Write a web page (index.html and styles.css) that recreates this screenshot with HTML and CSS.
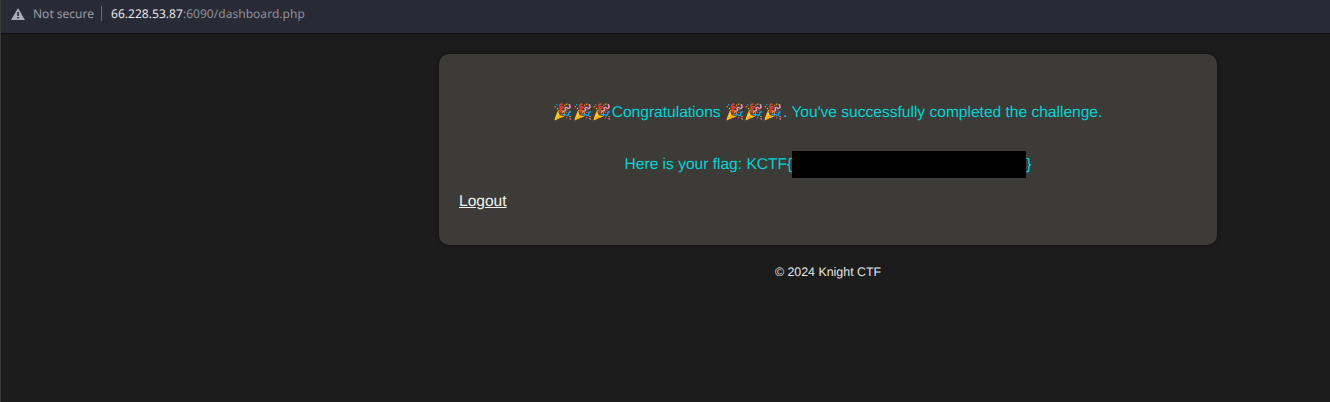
FILE: index.html
```html
<!DOCTYPE html>
<html lang="en">
<head>
<meta charset="utf-8">
<title>Dashboard</title>
<link rel="stylesheet" href="styles.css">
</head>
<body>
<header class="bar">
  <svg class="warn" width="14" height="12" viewBox="0 0 14 12"><path d="M7 0 L14 12 H0 Z M6.2 4 V8 H7.8 V4 Z M6.2 9 V10.6 H7.8 V9 Z" fill="#a9adb3" fill-rule="evenodd"/></svg>
  <span class="secure">Not secure</span>
  <span class="sep"></span>
  <span class="url"><span class="host">66.228.53.87</span>:6090/dashboard.php</span>
</header>
<main class="page">
  <section class="card">
    <p class="msg first">🎉🎉🎉Congratulations 🎉🎉🎉. You've successfully completed the challenge.</p>
    <p class="msg second">Here is your flag: KCTF{<span class="redact"></span>}</p>
    <a class="logout" href="#">Logout</a>
  </section>
  <footer class="foot">© 2024 Knight CTF</footer>
</main>
</body>
</html>
```
FILE: styles.css
```css
* { box-sizing: border-box; }
html, body { margin: 0; height: 100%; }
body {
  background: #1c1c1c;
  border-left: 1px solid #3a3a3a;
  font-family: "Liberation Sans", Arial, sans-serif;
  text-rendering: geometricPrecision;
  overflow: hidden;
}
.bar {
  height: 34px;
  margin-left: -1px;
  background: #282a36;
  border-bottom: 1px solid #0c0d10;
  display: flex;
  align-items: center;
  padding: 0 0 6px 11px;
  font-family: "Noto Sans", "Open Sans", sans-serif;
  font-size: 12px;
}
.warn { flex: none; }
.secure { color: #9a9ea6; margin-left: 8px; }
.sep { width: 1px; height: 15px; background: #6a6d75; margin: 0 9px 0 7px; }
.url { color: #8e9198; letter-spacing: 0.003em; }
.host { color: #e6e7ea; }
.page {
  margin-left: 438px;
  width: 778px;
}
.card {
  margin-top: 20px;
  height: 191px;
  background: #3c3b37;
  border-radius: 10px;
  box-shadow: 0 0 4px rgba(0, 0, 0, 0.4);
  padding: 20px;
  display: flow-root;
}
.msg {
  margin: 0;
  text-align: center;
  color: #00d4d6;
  font-size: 15.55px;
  line-height: 18px;
}
.first { margin-top: 30px; }
.second { margin-top: 34px; }
.redact {
  display: inline-block;
  width: 234px;
  height: 27px;
  margin: -5px 0 -5px 0;
  background: #000;
  vertical-align: middle;
}
.logout {
  display: inline-block;
  margin-top: 19px;
  color: #f2f2f2;
  font-size: 15.55px;
  line-height: 18px;
}
.foot {
  margin-top: 20px;
  text-align: center;
  color: #e4e4e4;
  font-size: 12.4px;
  line-height: 15px;
}
```
